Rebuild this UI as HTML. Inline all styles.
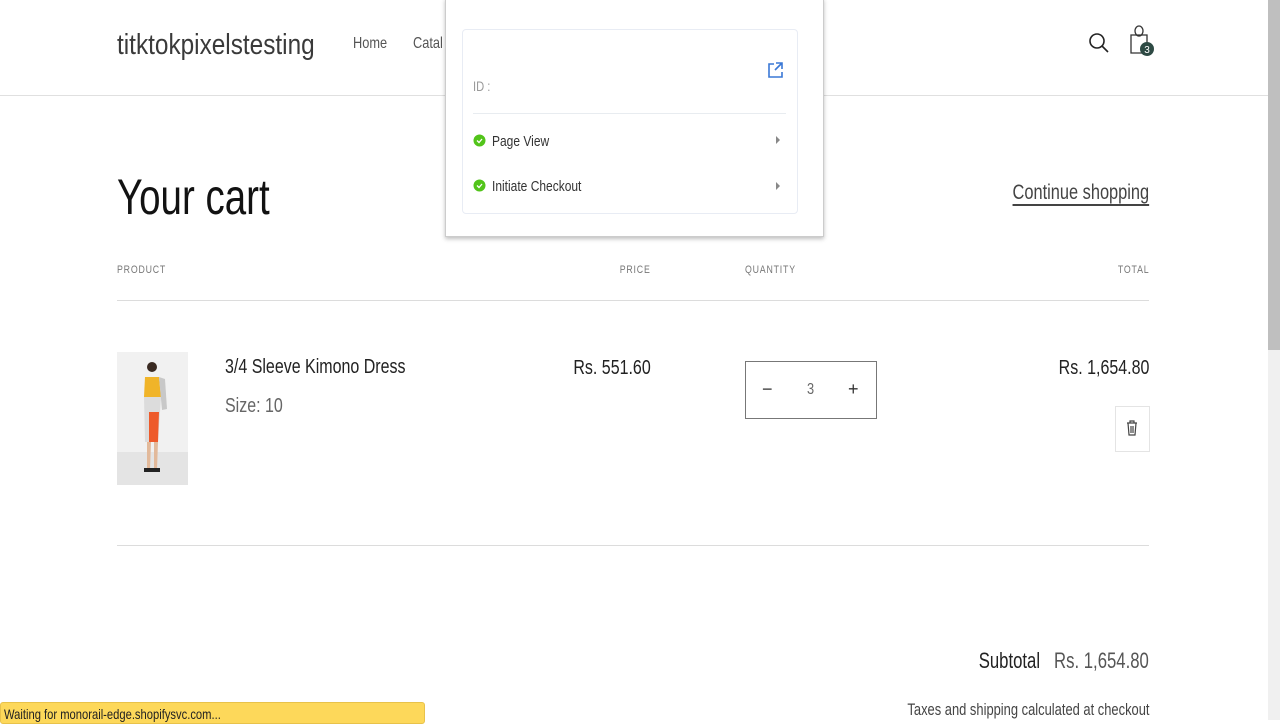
<!DOCTYPE html>
<html><head><meta charset="utf-8"><style>
*{margin:0;padding:0;box-sizing:border-box}
body{width:1280px;height:720px;overflow:hidden;background:#fff;font-family:"Liberation Sans",sans-serif;color:#121212;position:relative}
.a{position:absolute;white-space:nowrap}
.n{display:inline-block;transform:scaleX(.8);transform-origin:0 0}
.r .n{transform-origin:100% 0}
.r{text-align:right}
.line{position:absolute;height:1px;background:#dcdcdc}
</style></head><body>
<div class="a" style="left:117px;top:29px;font-size:29px;color:#3a3a3a"><span class="n" style="transform:scaleX(.84)">titktokpixelstesting</span></div>
<div class="a" style="left:353px;top:35px;font-size:16px;color:#555"><span class="n">Home</span></div>
<div class="a" style="left:413px;top:35px;font-size:16px;color:#555"><span class="n">Catal</span></div>
<svg class="a" style="left:1087px;top:31px" width="24" height="24" viewBox="0 0 24 24" fill="none" stroke="#222" stroke-width="1.6"><circle cx="10" cy="10" r="7"/><path d="M15 15l6 6"/></svg>
<svg class="a" style="left:1128px;top:22px" width="30" height="40" viewBox="0 0 30 40" fill="none" stroke="#333" stroke-width="1.3"><ellipse cx="11" cy="9" rx="4" ry="5"/><path d="M3 13h16v18H3z"/><circle cx="19" cy="27" r="7" fill="#2e4a44" stroke="none"/><text x="19" y="31" font-size="10" fill="#fff" stroke="none" text-anchor="middle" font-family="Liberation Sans">3</text></svg>
<div class="line" style="left:0;top:95px;width:1268px;background:#e0e0e0"></div>
<div class="a" style="left:117px;top:168px;font-size:50px;color:#121212"><span class="n" style="transform:scaleX(.77)">Your cart</span></div>
<div class="a r" style="left:849px;width:300px;top:181px;font-size:21px;color:#444;"><span class="n" style="text-decoration:underline;text-underline-offset:5px;transform:scaleX(.78)">Continue shopping</span></div>
<div class="a" style="left:117px;top:264px;font-size:11px;color:#777;letter-spacing:1px"><span class="n">PRODUCT</span></div>
<div class="a r" style="left:551px;width:100px;top:264px;font-size:11px;color:#777;letter-spacing:1px"><span class="n">PRICE</span></div>
<div class="a" style="left:745px;top:264px;font-size:11px;color:#777;letter-spacing:1px"><span class="n">QUANTITY</span></div>
<div class="a r" style="left:1049px;width:100px;top:264px;font-size:11px;color:#777;letter-spacing:1px"><span class="n">TOTAL</span></div>
<div class="line" style="left:117px;top:300px;width:1032px"></div>
<svg class="a" style="left:117px;top:352px" width="71" height="133" viewBox="0 0 71 133"><rect width="71" height="133" fill="#f1f1f1"/><rect y="100" width="71" height="33" fill="#e4e4e4"/><circle cx="35" cy="15" r="5" fill="#3a2a22"/><path d="M28 25h14l2 20H27z" fill="#f0b429"/><path d="M42 25l6 2 2 30-5 1z" fill="#c8c8c8"/><path d="M27 45h17l-3 45H28z" fill="#dcdcdc"/><path d="M32 60h10l-1 30h-9z" fill="#ee5a2a"/><path d="M30 90h4l-1 28h-3zM37 90h4l-1 28h-3z" fill="#e2b99a"/><rect x="27" y="116" width="16" height="4" fill="#222"/></svg>
<div class="a" style="left:225px;top:356px;font-size:20px;color:#222"><span class="n">3/4 Sleeve Kimono Dress</span></div>
<div class="a" style="left:225px;top:395px;font-size:20px;color:#666"><span class="n">Size: 10</span></div>
<div class="a r" style="left:451px;width:200px;top:357px;font-size:20px;color:#222"><span class="n">Rs. 551.60</span></div>
<div class="a" style="left:745px;top:361px;width:132px;height:58px;border:1px solid #777"></div>
<div class="a" style="left:762px;top:379px;font-size:18px;color:#333">−</div>
<div class="a" style="left:807px;top:381px;font-size:16px;color:#666"><span class="n">3</span></div>
<div class="a" style="left:848px;top:379px;font-size:18px;color:#333">+</div>
<div class="a r" style="left:949px;width:200px;top:357px;font-size:20px;color:#222"><span class="n">Rs. 1,654.80</span></div>
<div class="a" style="left:1115px;top:406px;width:35px;height:46px;border:1px solid #e4e4e4"></div>
<svg class="a" style="left:1126px;top:420px" width="12" height="16" viewBox="0 0 12 16" fill="none" stroke="#444" stroke-width="1.2"><path d="M1 3h10M4 3V1h4v2M2 3l1 12h6l1-12M5 6v7M7 6v7"/></svg>
<div class="line" style="left:117px;top:545px;width:1032px"></div>
<div class="a r" style="left:649px;width:500px;top:648px;font-size:22px;color:#222"><span class="n" style="transform:scaleX(.76)">Subtotal&nbsp;&nbsp;&nbsp;<span style="color:#555">Rs. 1,654.80</span></span></div>
<div class="a r" style="left:649px;width:500px;top:700px;font-size:17px;color:#444"><span class="n" style="transform:scaleX(.76)">Taxes and shipping calculated at checkout</span></div>
<!-- popup -->
<div class="a" style="left:445px;top:-2px;width:379px;height:239px;background:#fff;border:1px solid #ccc;box-shadow:0 2px 4px rgba(0,0,0,.25)"></div>
<div class="a" style="left:462px;top:29px;width:336px;height:185px;border:1px solid #e8ecf4;border-radius:4px"></div>
<div class="a" style="left:473px;top:78px;font-size:14px;color:#999"><span class="n">ID :</span></div>
<svg class="a" style="left:767px;top:61px" width="17" height="18" viewBox="0 0 17 18" fill="none" stroke="#3a78d6" stroke-width="1.6"><path d="M7 3H2v13h13v-5M9 2h6v6M15 2L8 9"/></svg>
<div class="line" style="left:473px;top:113px;width:313px;background:#e8ecf0"></div>
<svg class="a" style="left:473px;top:134px" width="13" height="13"><circle cx="6.5" cy="6.5" r="6" fill="#52c41a"/><path d="M4 6.5l2 2 3-3.5" stroke="#fff" stroke-width="1.3" fill="none"/></svg>
<div class="a" style="left:492px;top:133px;font-size:15px;color:#333"><span class="n">Page View</span></div>
<div class="a" style="left:776px;top:136px;width:0;height:0;border-left:4px solid #888;border-top:4px solid transparent;border-bottom:4px solid transparent"></div>
<svg class="a" style="left:473px;top:179px" width="13" height="13"><circle cx="6.5" cy="6.5" r="6" fill="#52c41a"/><path d="M4 6.5l2 2 3-3.5" stroke="#fff" stroke-width="1.3" fill="none"/></svg>
<div class="a" style="left:492px;top:178px;font-size:15px;color:#333"><span class="n">Initiate Checkout</span></div>
<div class="a" style="left:776px;top:182px;width:0;height:0;border-left:4px solid #888;border-top:4px solid transparent;border-bottom:4px solid transparent"></div>
<!-- status -->
<div class="a" style="left:0;top:702px;width:425px;height:22px;background:#fdd85a;border:1px solid #e8c24a;border-radius:3px"></div>
<div class="a" style="left:4px;top:706px;font-size:14px;color:#222"><span class="n">Waiting for monorail-edge.shopifysvc.com...</span></div>
<!-- scrollbar -->
<div class="a" style="left:1268px;top:0;width:12px;height:720px;background:#f0f0f0"></div>
<div class="a" style="left:1268px;top:0;width:12px;height:350px;background:#bfbfbf"></div>
</body></html>
